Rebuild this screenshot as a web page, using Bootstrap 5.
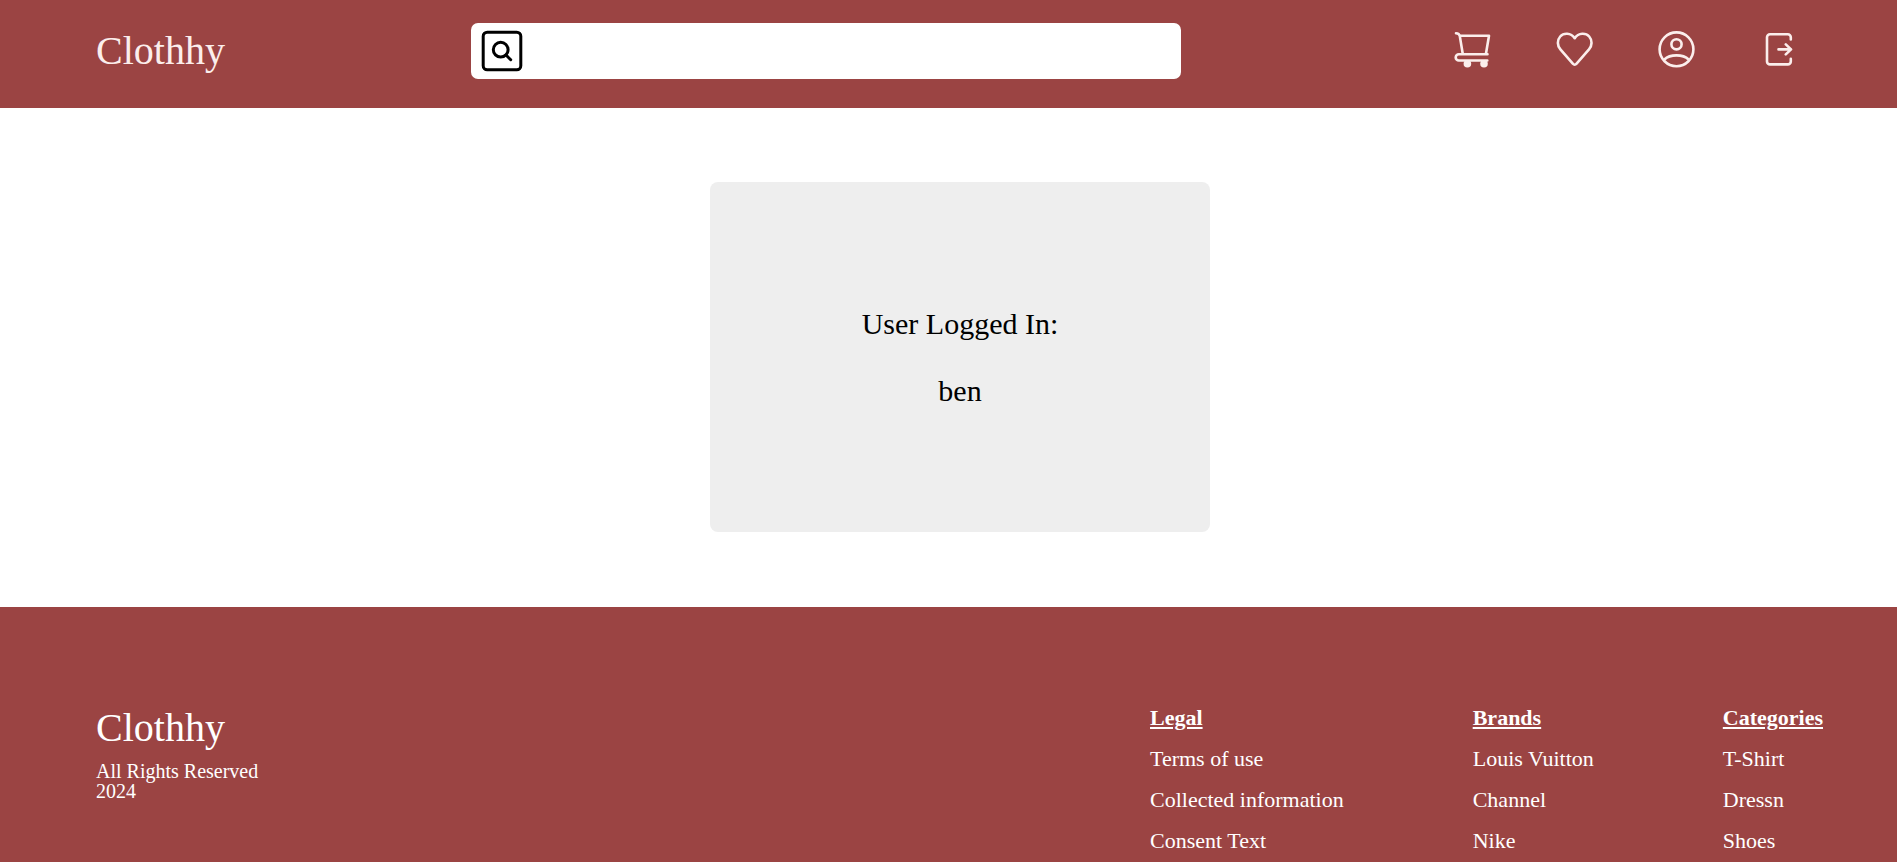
<!DOCTYPE html>
<html lang="en">
<head>
<meta charset="utf-8">
<meta name="viewport" content="width=device-width, initial-scale=1">
<title>Clothhy</title>
<link href="https://cdn.jsdelivr.net/npm/bootstrap@5.3.0/dist/css/bootstrap.min.css" rel="stylesheet">
<style>
  body { font-family: "Liberation Serif", "Times New Roman", serif; color: #000; background: #fff; }
  .brick { background: #9b4443; }
  .site-header { padding: 23px 99px 29px 96px; }
  .brand-name { font-size: 40px; line-height: 46px; color: #fff; }
  .site-header .brand-name, .site-header .icon-nav { color: #fbeeec; }
  .search-bar { height: 56px; margin: 0 271px 0 246px; padding: 0 10px; border-radius: 7px; }
  .search-bar input { font-size: 22px; }
  .icon-nav { gap: 62px; }
  .icon-nav svg, .search-bar svg { display: block; fill: none; stroke: currentColor; stroke-linecap: round; stroke-linejoin: round; }
  .icon-nav svg { stroke-width: 2.6; }
  .page-main { padding: 74px 0 75px 23px; }
  .user-card { width: 500px; min-height: 350px; gap: 34px; border-radius: 8px; background: #eee; font-size: 30px; line-height: 33px; }
  .site-footer { padding: 98px 74px 7px 96px; color: #fff; }
  .rights { margin-top: 10px; font-size: 20px; line-height: 20px; }
  .link-columns { gap: 129px; font-size: 22px; line-height: 26px; }
  .link-columns ul, .link-columns section { display: flex; flex-direction: column; gap: 15px; }
  .link-columns h2 { font-size: 22px; line-height: 26px; }
  @media (max-width: 1399px) {
    .search-bar { margin: 0 60px; }
    .icon-nav { gap: 24px; }
    .link-columns { gap: 48px; }
  }
  @media (max-width: 991px) {
    .site-header, .site-footer { padding-left: 24px; padding-right: 24px; }
    .search-bar { margin: 0 24px; }
    .page-main { padding-left: 0; }
    .site-footer { flex-wrap: wrap; gap: 32px; }
  }
</style>
</head>
<body class="d-flex flex-column min-vh-100">
<header class="site-header brick d-flex align-items-center">
  <a href="#" class="brand-name text-decoration-none">Clothhy</a>
  <form class="search-bar bg-white d-flex align-items-center flex-grow-1" role="search">
    <button type="submit" class="btn p-0 border-0 text-black" aria-label="Search">
      <svg width="42" height="42" viewBox="0 0 42 42" stroke-width="3"><rect x="2.2" y="2.2" width="37.6" height="37.6" rx="4"/><circle cx="19.7" cy="19.7" r="7.4"/><path d="M25 25l4.7 4.7"/></svg>
    </button>
    <input type="text" class="form-control border-0 shadow-none bg-transparent" aria-label="Search products">
  </form>
  <nav class="icon-nav d-flex pb-1" aria-label="Account">
    <a href="#" class="text-reset" aria-label="Cart">
      <svg width="40" height="40" viewBox="0 0 40 40"><path d="M4 4.2c2.400 0 3.400 .9 3.800 2.900L10.700 24.500M8 6.800H37L34 24.500M35.500 25.300H6.800a3 3 0 0 0 0 6.200H35.300"/><g fill="currentColor" stroke="none"><circle cx="15.400" cy="34.800" r="3.800"/><circle cx="32" cy="34.800" r="3.800"/></g></svg>
    </a>
    <a href="#" class="text-reset" aria-label="Wishlist">
      <svg width="40" height="40" viewBox="0 0 40 40"><path d="M20.700 9.200C16.800 3.400 9.500 3.800 6.200 7.500C3 11.200 3.100 16.500 6.400 20.400L18.800 34.700Q20.700 36.800 22.600 34.700L35 20.400C38.300 16.500 38.400 11.200 35.200 7.500C31.900 3.800 24.600 3.400 20.700 9.200Z"/></svg>
    </a>
    <a href="#" class="text-reset" aria-label="Profile">
      <svg width="40" height="40" viewBox="0 0 40 40"><circle cx="20.500" cy="20.300" r="16.900"/><circle cx="20.500" cy="15.300" r="5.100"/><path d="M8.400 30.500C14 25 27 25 32.600 30.500"/></svg>
    </a>
    <a href="#" class="text-reset" aria-label="Log out">
      <svg width="40" height="40" viewBox="0 0 40 40"><path d="M32.800 10.500V8.300a3 3 0 0 0-3-3H12a3 3 0 0 0-3 3V32.400a3 3 0 0 0 3 3H29.800a3 3 0 0 0 3-3V29.800M20.500 20.400H33M27.800 15.400L33 20.400L27.800 25.400"/></svg>
    </a>
  </nav>
</header>

<main class="page-main d-flex justify-content-center">
  <section class="user-card d-flex flex-column align-items-center justify-content-center">
    <p class="m-0">User Logged In:</p>
    <p class="m-0">ben</p>
  </section>
</main>

<footer class="site-footer brick d-flex justify-content-between flex-grow-1">
  <div>
    <div class="brand-name">Clothhy</div>
    <p class="rights mb-0">All Rights Reserved<br>2024</p>
  </div>
  <div class="link-columns d-flex flex-wrap">
    <section>
      <h2 class="fw-bold text-decoration-underline m-0">Legal</h2>
      <ul class="list-unstyled m-0">
        <li><a href="#" class="text-reset text-decoration-none">Terms of use</a></li>
        <li><a href="#" class="text-reset text-decoration-none">Collected information</a></li>
        <li><a href="#" class="text-reset text-decoration-none">Consent Text</a></li>
      </ul>
    </section>
    <section>
      <h2 class="fw-bold text-decoration-underline m-0">Brands</h2>
      <ul class="list-unstyled m-0">
        <li><a href="#" class="text-reset text-decoration-none">Louis Vuitton</a></li>
        <li><a href="#" class="text-reset text-decoration-none">Channel</a></li>
        <li><a href="#" class="text-reset text-decoration-none">Nike</a></li>
      </ul>
    </section>
    <section>
      <h2 class="fw-bold text-decoration-underline m-0">Categories</h2>
      <ul class="list-unstyled m-0">
        <li><a href="#" class="text-reset text-decoration-none">T-Shirt</a></li>
        <li><a href="#" class="text-reset text-decoration-none">Dressn</a></li>
        <li><a href="#" class="text-reset text-decoration-none">Shoes</a></li>
      </ul>
    </section>
  </div>
</footer>
<script src="https://cdn.jsdelivr.net/npm/bootstrap@5.3.0/dist/js/bootstrap.bundle.min.js"></script>
</body>
</html>
